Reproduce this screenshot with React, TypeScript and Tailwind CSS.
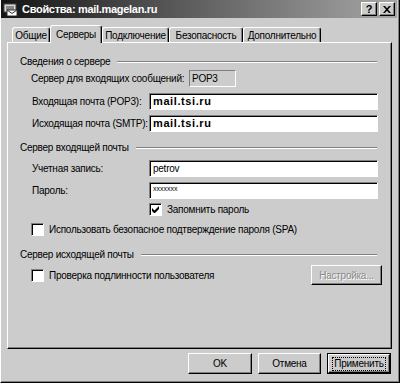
import React from "react";

const font = { fontFamily: '"Liberation Sans", Arial, sans-serif' };

const sunken =
  "border border-t-[#808080] border-l-[#808080] border-b-white border-r-white shadow-[inset_1px_1px_0_#000]";
const raised =
  "border border-t-white border-l-white border-b-black border-r-black shadow-[inset_-1px_-1px_0_#808080]";

const GroupHeader = ({ title }: { title: string }) => (
  <div className="flex items-center h-[13px] pr-[14px]">
    <span className="whitespace-nowrap">{title}</span>
    <div className="flex-1 ml-[7px] h-[2px] border-t border-t-[#808080] border-b border-b-white" />
  </div>
);

const CheckBox = ({ checked, label }: { checked?: boolean; label: string }) => (
  <div className="flex items-center h-[13px]">
    <div className={`w-[13px] h-[13px] bg-white ${sunken} flex items-center justify-center`}>
      {checked && (
        <svg width="7" height="7" viewBox="0 0 7 7">
          <path d="M0 2v3l2 2h1l4-4V0L2.5 4.5z" fill="#000" />
        </svg>
      )}
    </div>
    <span className="ml-[5px] whitespace-nowrap">{label}</span>
  </div>
);

const Field = ({ label, value, kind }: { label: string; value: string; kind?: "bold" | "pass" }) => (
  <div className="flex items-center h-[17px] pl-[24px] pr-[13px]">
    <span className="w-[117px] whitespace-nowrap">{label}</span>
    <div className={`flex-1 h-[17px] bg-white ${sunken} flex items-center pl-[3px]`}>
      {kind === "bold" && <span className="font-bold tracking-[0.6px] text-[11px]">{value}</span>}
      {kind === "pass" && <span className="text-[7px] leading-[7px] tracking-[0px] -mt-[4px]">{value}</span>}
      {!kind && <span>{value}</span>}
    </div>
  </div>
);

const Tab = ({ label, w, active }: { label: string; w: string; active?: boolean }) => (
  <div
    className={`${w} flex items-center justify-center border-t border-l border-t-white border-l-white border-r border-r-black shadow-[inset_-1px_0_0_#808080] rounded-t-[3px] bg-[#cccccc] ${
      active ? "h-[18px] relative z-10 -mb-[1px]" : "h-[15px]"
    }`}
  >
    {label}
  </div>
);

export default function App() {
  return (
    <div
      style={font}
      className="w-[400px] h-[383px] bg-[#cccccc] text-[10px] tracking-[-0.25px] leading-[13px] text-black flex flex-col border-l border-l-white border-r border-r-black border-b border-b-black shadow-[inset_-1px_-1px_0_#808080] overflow-hidden"
    >
      {/* Title bar */}
      <div className="h-[18px] mr-[2px] flex items-center bg-[linear-gradient(90deg,#141414_0%,#5a5a5a_45%,#a6a6a6_100%)]">
        <svg className="ml-[2px]" width="16" height="14" viewBox="0 0 16 14">
          <rect x="1" y="2" width="12" height="8" fill="#d8d8d8" stroke="#444" />
          <rect x="3" y="4" width="8" height="4" fill="#888" />
          <path d="M4 8h10v6H4z" fill="#fff" stroke="#333" />
          <path d="M4 8l5 3.5L14 8" fill="none" stroke="#333" />
        </svg>
        <span className="ml-[3px] font-bold text-white whitespace-nowrap text-[11px] tracking-[-0.3px]">
          Свойства: mail.magelan.ru
        </span>
        <div className="flex-1" />
        <div className={`w-[16px] h-[14px] ${raised} bg-[#cccccc] flex items-center justify-center font-bold text-[11px]`}>
          ?
        </div>
        <div className={`ml-[2px] mr-[2px] w-[16px] h-[14px] ${raised} bg-[#cccccc] flex items-center justify-center`}>
          <svg width="8" height="7" viewBox="0 0 8 7">
            <path d="M0 0h2l2 2.2L6 0h2L5 3.5 8 7H6L4 4.8 2 7H0l3-3.5z" fill="#000" />
          </svg>
        </div>
      </div>

      {/* Tabs */}
      <div className="flex items-end mt-[7px] pl-[11px]">
        <Tab label="Общие" w="w-[38px]" />
        <Tab label="Серверы" w="w-[52px]" active />
        <Tab label="Подключение" w="w-[67px]" />
        <Tab label="Безопасность" w="w-[74px]" />
        <Tab label="Дополнительно" w="w-[78px]" />
      </div>

      {/* Panel */}
      <div className="ml-[6px] mr-[7px] h-[307px] border-t border-l border-t-white border-l-white border-r border-r-black border-b border-b-black shadow-[inset_-1px_-1px_0_#808080] flex flex-col pl-[12px]">
        <div className="mt-[12px]">
          <GroupHeader title="Сведения о сервере" />
        </div>
        <div className="mt-[2px] flex items-center h-[17px] pl-[11px]">
          <span className="w-[158px] whitespace-nowrap">Сервер для входящих сообщений:</span>
          <div className="w-[47px] h-[17px] border border-t-[#808080] border-l-[#808080] border-b-white border-r-white flex items-center pl-[2px]">
            POP3
          </div>
        </div>
        <div className="mt-[6px] -ml-[12px]">
          <Field label="Входящая почта (POP3):" value="mail.tsi.ru" kind="bold" />
        </div>
        <div className="mt-[5px] -ml-[12px]">
          <Field label="Исходящая почта (SMTP):" value="mail.tsi.ru" kind="bold" />
        </div>

        <div className="mt-[9px]">
          <GroupHeader title="Сервер входящей почты" />
        </div>
        <div className="mt-[6px] -ml-[12px]">
          <Field label="Учетная запись:" value="petrov" />
        </div>
        <div className="mt-[5px] -ml-[12px]">
          <Field label="Пароль:" value="xxxxxxx" kind="pass" />
        </div>
        <div className="mt-[4px] pl-[129px]">
          <CheckBox checked label="Запомнить пароль" />
        </div>
        <div className="mt-[7px] pl-[11px]">
          <CheckBox label="Использовать безопасное подтверждение пароля (SPA)" />
        </div>

        <div className="mt-[12px]">
          <GroupHeader title="Сервер исходящей почты" />
        </div>
        <div className="mt-[4px] flex items-center h-[20px] pl-[11px] pr-[9px]">
          <CheckBox label="Проверка подлинности пользователя" />
          <div className="flex-1" />
          <div className={`w-[71px] h-[20px] ${raised} flex items-center justify-center text-[#8a8a8a] [text-shadow:1px_1px_0_#fff]`}>
            Настройка...
          </div>
        </div>
      </div>

      {/* Buttons */}
      <div className="flex justify-end gap-[6px] mt-[4px] mr-[8px]">
        <div className={`w-[64px] h-[21px] ${raised} flex items-center justify-center`}>OK</div>
        <div className={`w-[63px] h-[21px] ${raised} flex items-center justify-center`}>Отмена</div>
        <div className="w-[64px] h-[21px] border border-black">
          <div className={`w-full h-full ${raised} flex items-center justify-center`}>
            <span className="border border-dotted border-black px-[1px] leading-[12px]">Применить</span>
          </div>
        </div>
      </div>
    </div>
  );
}
